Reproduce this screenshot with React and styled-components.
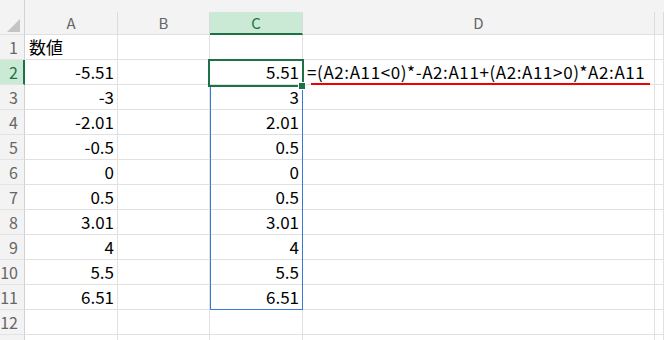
import React from "react";
import styled, { createGlobalStyle, css } from "styled-components";

const Global = createGlobalStyle`
  html, body { margin: 0; padding: 0; background: #ffffff; }
  body { font-family: "Noto Sans CJK JP", "Noto Sans", sans-serif; overflow: hidden; }
`;

const GREEN = "#1e7145";
const GRID = "#e1e1e1";
const HEAD_BG = "#f3f3f3";

const Sheet = styled.div`
  display: grid;
  grid-template-columns: 25px 93px 92px 93px 352px 1fr;
  grid-template-rows: 12px 23px;
  grid-auto-rows: 25px;
  width: 664px;
  height: 340px;
  overflow: hidden;
  font-family: "Noto Sans CJK JP", "Noto Sans", sans-serif;
`;

const Corner = styled.div`
  grid-row: 1 / span 2;
  position: relative;
  background: ${HEAD_BG};
  border-right: 1px solid #d2d2d2;
  border-bottom: 1px solid #e0e0e0;
  box-sizing: border-box;
`;

const Triangle = styled.div`
  position: absolute;
  right: 4px;
  bottom: 2px;
  width: 0;
  height: 0;
  border-left: 13px solid transparent;
  border-bottom: 13px solid #c4c4c4;
`;

const TopStrip = styled.div`
  grid-column: 2 / -1;
  background: ${HEAD_BG};
`;

const ColHead = styled.div`
  box-sizing: border-box;
  display: flex;
  align-items: center;
  justify-content: center;
  font-size: 15px;
  line-height: 22px;
  color: #666666;
  background: ${HEAD_BG};
  border-right: 1px solid #dcdcdc;
  border-bottom: 1px solid #e0e0e0;
  ${(p) =>
    p.$active &&
    css`
      background: #caead6;
      color: ${GREEN};
      border-bottom: 2px solid ${GREEN};
    `}
`;

const RowHead = styled.div`
  box-sizing: border-box;
  display: flex;
  justify-content: flex-end;
  padding-right: 6px;
  font-size: 16px;
  line-height: 24px;
  color: #666666;
  background: ${HEAD_BG};
  border-right: 1px solid #d2d2d2;
  border-bottom: 1px solid #e3e3e3;
  ${(p) =>
    p.$active &&
    css`
      background: #caead6;
      color: ${GREEN};
      border-right: 2px solid ${GREEN};
      padding-right: 5px;
    `}
`;

const Cell = styled.div`
  box-sizing: border-box;
  position: relative;
  display: flex;
  justify-content: ${(p) => (p.$num ? "flex-end" : "flex-start")};
  padding: 0 3px 0 4px;
  font-size: 17px;
  line-height: 24px;
  color: #000000;
  white-space: nowrap;
  border-right: 1px solid ${GRID};
  border-bottom: 1px solid ${GRID};
  ${(p) => p.$overflow && css`overflow: visible; z-index: 2;`}
`;

const Selection = styled.div`
  position: absolute;
  left: -2px;
  top: -1px;
  width: 96px;
  height: 28px;
  box-sizing: border-box;
  border: 2px solid ${GREEN};
  z-index: 4;
  pointer-events: none;
`;

const FillHandle = styled.div`
  position: absolute;
  right: -3px;
  bottom: -4px;
  width: 6px;
  height: 6px;
  background: ${GREEN};
  box-shadow: 0 0 0 1px #ffffff;
`;

const SpillRange = styled.div`
  position: absolute;
  left: 0;
  top: 0;
  width: 93px;
  height: 225px;
  box-sizing: border-box;
  border: 1px solid #3a78d6;
  z-index: 3;
  pointer-events: none;
`;

const Formula = styled.span`
  position: relative;
  letter-spacing: 0.6px;
`;

const RedLine = styled.span`
  position: absolute;
  left: 4px;
  right: -5px;
  bottom: -1px;
  height: 2px;
  background: #ee0000;
`;

const values = ["-5.51", "-3", "-2.01", "-0.5", "0", "0.5", "3.01", "4", "5.5", "6.51"];
const results = ["5.51", "3", "2.01", "0.5", "0", "0.5", "3.01", "4", "5.5", "6.51"];

export default function App() {
  const rows = [];
  for (let r = 1; r <= 13; r++) {
    const i = r - 2;
    rows.push(
      <React.Fragment key={r}>
        <RowHead $active={r === 2}>{r <= 12 ? r : ""}</RowHead>
        <Cell $num={r > 1}>{r === 1 ? "数値" : values[i] || ""}</Cell>
        <Cell />
        <Cell $num>
          {results[i] || ""}
          {r === 2 && (
            <Selection>
              <FillHandle />
            </Selection>
          )}
          {r === 3 && <SpillRange />}
        </Cell>
        <Cell $overflow={r === 2}>
          {r === 2 && (
            <Formula>
              =(A2:A11&lt;0)*-A2:A11+(A2:A11&gt;0)*A2:A11
              <RedLine />
            </Formula>
          )}
        </Cell>
        <Cell />
      </React.Fragment>
    );
  }
  return (
    <>
      <Global />
      <Sheet>
        <Corner>
          <Triangle />
        </Corner>
        <TopStrip />
        <ColHead>A</ColHead>
        <ColHead>B</ColHead>
        <ColHead $active>C</ColHead>
        <ColHead>D</ColHead>
        <ColHead />
        {rows}
      </Sheet>
    </>
  );
}
